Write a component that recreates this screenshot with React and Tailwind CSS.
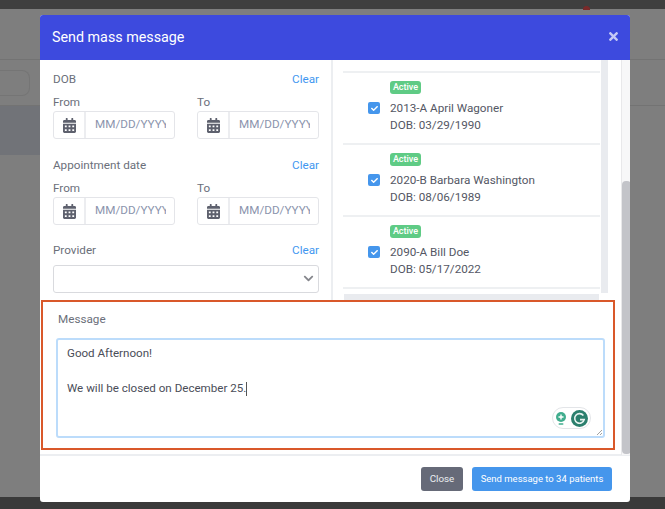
import React from 'react';
import { FaCalendarAlt, FaChevronDown, FaTimes, FaCheck } from 'react-icons/fa';

function ClearRow({ label, className }) {
  return (
    <div className={`flex justify-between items-center h-[20px] ${className}`}>
      <span className="text-[#6b6f7a]">{label}</span>
      <span className="text-[#3f97f0]">Clear</span>
    </div>
  );
}

function DateField({ label }) {
  return (
    <div className="w-[122px]">
      <div className="h-[20px] flex items-center text-[#6b6f7a]">{label}</div>
      <div className="flex h-[28px] mt-[-2px] border border-[#e4e5e9] rounded-[3px] bg-white">
        <div className="w-[32px] shrink-0 flex items-center justify-center border-r-2 border-[#ecedf0]">
          <FaCalendarAlt className="w-[13px] h-[15px] text-[#5e616e]" />
        </div>
        <input
          placeholder="MM/DD/YYYY"
          className="min-w-0 w-[71px] ml-[9px] text-[11.7px] outline-none placeholder:text-[#8b94ad] placeholder:opacity-100"
        />
      </div>
    </div>
  );
}

function DateRange({ label, className }) {
  return (
    <div className={className}>
      <ClearRow label={label} />
      <div className="flex justify-between mt-[3px]">
        <DateField label="From" />
        <DateField label="To" />
      </div>
    </div>
  );
}

function Patient({ name, dob }) {
  return (
    <div className="h-[72px] border-t-2 border-[#eef0f2] flex items-start">
      <div className="w-[25px] shrink-0 pt-[29px] ml-[25px]">
        <div className="w-[12px] h-[12px] rounded-[2px] bg-[#4596ec] flex items-center justify-center">
          <FaCheck className="w-[7px] h-[7px] text-white" />
        </div>
      </div>
      <div className="ml-[-3px] pt-[8px]">
        <div className="w-[31px] h-[13px] rounded-[3px] bg-[#5fcb85] text-white text-[9px] font-medium leading-[13px] text-center">
          Active
        </div>
        <div className="mt-[6px] leading-[17px] text-[#545764]">{name}</div>
        <div className="leading-[17px] text-[#545764]">DOB: {dob}</div>
      </div>
    </div>
  );
}

const patients = [
  { name: '2013-A April Wagoner', dob: '03/29/1990' },
  { name: '2020-B Barbara Washington', dob: '08/06/1989' },
  { name: '2090-A Bill Doe', dob: '05/17/2022' },
];

function GrammarlyBadge() {
  return (
    <div className="absolute right-[12px] bottom-[7px] w-[39px] h-[22px] rounded-full border border-[#e3e5e8] bg-white flex items-center justify-end gap-[5px] pr-[2px]">
      <svg width="10" height="13" viewBox="0 0 10 13">
        <circle cx="5" cy="5" r="5" fill="#41ad8e" />
        <path d="M5 2.5v5M2.5 5h5" stroke="#fff" strokeWidth="1.4" />
        <rect x="2.5" y="11.2" width="5" height="1.6" rx="0.8" fill="#41ad8e" />
      </svg>
      <svg width="17" height="17" viewBox="0 0 17 17">
        <circle cx="8.5" cy="8.5" r="8.5" fill="#2b7f6d" />
        <path d="M12.4 5.6A4.8 4.8 0 1 0 13.2 9.6H9" fill="none" stroke="#e6f2ef" strokeWidth="1.6" />
      </svg>
    </div>
  );
}

export default function App() {
  return (
    <div className="relative h-[509px] w-[665px] overflow-hidden flex flex-col bg-[#7e7e7e] font-['Roboto',sans-serif] text-[11.7px]">
      {/* dimmed page behind the modal */}
      <div className="h-[9px] bg-[#3f3f3f] shrink-0" />
      <div className="flex-1 flex flex-col">
        <div className="h-[51px] border-b border-[#737373]" />
        <div className="h-[46px] border-b border-[#737373] flex items-center">
          <div className="w-[30px] h-[26px] rounded-r-[8px] border border-l-0 border-[#757575]" />
        </div>
        <div className="h-[49px] w-[40px] bg-[#717378]" />
      </div>
      <div className="h-[12px] bg-[#3a3a3a] shrink-0" />
      <div className="absolute left-[583px] top-[6px] w-[7px] h-[4px] rounded-t-full bg-[#7a2a2a]" />

      {/* modal */}
      <div className="absolute left-[40px] top-[15px] w-[590px] h-[487px] bg-white rounded-[3px] flex flex-col overflow-hidden">
        <div className="h-[45px] shrink-0 bg-[#3d4ade] flex items-center justify-between pl-[12px] pr-[12px]">
          <span className="text-white text-[14.3px]">Send mass message</span>
          <FaTimes className="w-[9px] h-[13px] text-[#c5c9f5] mt-[-2px]" />
        </div>
        <div className="flex-1 min-h-0 flex">
          <div className="w-[581px] flex flex-col">
            <div className="h-[240px] flex shrink-0">
              <div className="w-[293px] shrink-0 border-r-2 border-[#eceef1] pl-[13px] pr-[12px] pt-[10px]">
                <DateRange label="DOB" />
                <DateRange label="Appointment date" className="mt-[17px]" />
                <ClearRow label="Provider" className="mt-[16px]" />
                <div className="mt-[4px] h-[28px] border border-[#d9dade] rounded-[3px] flex items-center justify-end pr-[4px]">
                  <FaChevronDown className="w-[11px] h-[11px] text-[#85868c] mt-[-1px]" />
                </div>
              </div>
              <div className="flex-1 relative overflow-hidden pt-[11px] pl-[10px]">
                {patients.map(p => (
                  <div key={p.name} className="w-[257px]">
                    <Patient name={p.name} dob={p.dob} />
                  </div>
                ))}
                <div className="w-[257px] border-t-2 border-[#eef0f2]" />
                <div className="absolute left-[11px] top-[234px] w-[255px] h-[6px] bg-[#e9ebef]" />
                <div className="absolute left-[268px] top-0 w-[7px] h-[233px] bg-[#e9ebef]" />
              </div>
            </div>

            <div className="h-[150px] shrink-0 ml-[1px] w-[574px] border-2 border-[#d9582a] flex flex-col px-[13px] pt-[8px]">
              <div className="text-[#6b6f7a] h-[20px] pl-[2px] flex items-center">Message</div>
              <div className="relative mt-[8px] h-[100px] w-[549px] rounded-[3px] border-2 border-[#bcdcfb] px-[9px] py-[5px] text-[#4a4d58] text-[11.6px] leading-[17.5px]">
                <div>Good Afternoon!</div>
                <div className="mt-[17.5px] flex items-center">
                  We will be closed on December 25.<span className="inline-block w-px h-[14px] bg-[#555]" />
                </div>
                <GrammarlyBadge />
                <svg className="absolute right-0 bottom-0" width="8" height="8" viewBox="0 0 8 8">
                  <path d="M7 2 2 7M7 5 5 7" stroke="#8a8a8a" strokeWidth="0.8" />
                </svg>
              </div>
            </div>

            <div className="mt-[4px] flex-1 w-[590px] border-t-2 border-[#eceef1] flex items-start justify-end gap-[9px] pr-[18px] pt-[11px]">
              <div className="w-[42px] h-[24px] rounded-[3px] bg-[#666a78] text-[#eceef1] text-[9.8px] flex items-center justify-center">Close</div>
              <div className="w-[140px] h-[24px] rounded-[3px] bg-[#4596ec] text-white text-[9.5px] whitespace-nowrap flex items-center justify-center">Send message to 34 patients</div>
            </div>
          </div>
          <div className="relative w-[9px] h-[395px] bg-[#f7f7f8] border-l border-[#e8e8ea]">
            <div className="absolute left-0 top-[121px] w-[9px] h-[273px] rounded-[4px] bg-[#c3c4c9]" />
          </div>
        </div>
      </div>
    </div>
  );
}
